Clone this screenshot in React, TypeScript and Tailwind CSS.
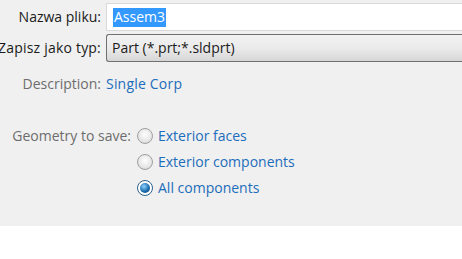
export default function App() {
  const font = { fontFamily: '"Open Sans", "Noto Sans", sans-serif' };
  return (
    <div className="w-[462px] h-[259px] bg-white overflow-hidden" style={font}>
      <div className="h-[226px] bg-[#f0f0f0] pt-[3px] text-[14px] leading-none">
        <div className="flex items-center h-[28px]">
          <div className="w-[101px] shrink-0 flex justify-end whitespace-nowrap text-[#1b1b1b]">Nazwa pliku:</div>
          <div className="ml-[5px] flex-1 h-[28px] bg-white border border-[#d9d9d9] border-r-0 flex items-center pl-[6px]">
            <span className="bg-[#3399ff] text-white px-[1px] h-[19px] flex items-center">Assem3</span>
          </div>
        </div>
        <div className="flex items-center h-[28px] mt-[3px]">
          <div className="w-[101px] shrink-0 flex justify-end whitespace-nowrap text-[#1b1b1b] tracking-[0.2px]">Zapisz jako typ:</div>
          <div className="ml-[5px] flex-1 h-[28px] rounded-l-[3px] border border-[#707070] border-r-0 bg-gradient-to-b from-[#f2f2f2] via-[#ebebeb] to-[#d6d6d6] flex items-center pl-[5px] text-[#1b1b1b]">
            Part (*.prt;*.sldprt)
          </div>
        </div>
        <div className="flex items-center h-[20px] mt-[12px]">
          <div className="w-[101px] shrink-0 flex justify-end whitespace-nowrap text-[#6d6d6d]">Description:</div>
          <div className="ml-[5px] text-[#1c6dbb] tracking-[0.2px]">Single Corp</div>
        </div>
        <div className="flex mt-[32px]">
          <div className="w-[131px] shrink-0 flex justify-end whitespace-nowrap text-[#6d6d6d] h-[20px] items-center">Geometry to save:</div>
          <div className="ml-[6px] flex flex-col gap-[6px]">
            {["Exterior faces", "Exterior components", "All components"].map((t, i) => (
              <div key={t} className="flex items-center h-[20px]">
                {i === 2 ? (
                  <span className="w-[16px] h-[16px] rounded-full border border-[#2c628b] bg-white flex items-center justify-center">
                    <span className="w-[10px] h-[10px] rounded-full bg-[radial-gradient(circle_at_40%_35%,#8fd3ff,#1c6db0_55%,#0d3a63)]" />
                  </span>
                ) : (
                  <span className="w-[16px] h-[16px] rounded-full border border-[#a0a0a0] bg-[radial-gradient(circle_at_50%_40%,#ffffff,#e6e6e6_60%,#cfcfcf)]" />
                )}
                <span className="ml-[5px] text-[#1c6dbb] whitespace-nowrap">{t}</span>
              </div>
            ))}
          </div>
        </div>
      </div>
    </div>
  );
}
